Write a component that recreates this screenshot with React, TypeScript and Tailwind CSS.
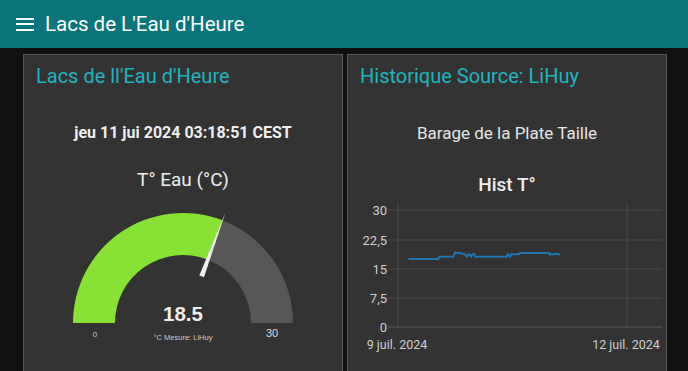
import React from "react";

const linePts: [number, number][] = [
  [190, 210], [280, 210], [283, 203], [325, 203], [330, 191], [345, 192], [360, 196], [365, 203],
  [372, 196], [378, 202], [382, 196], [388, 196], [390, 203], [485, 203], [488, 196], [495, 203],
  [498, 196], [522, 196], [525, 192], [612, 192], [615, 198], [620, 194], [625, 197], [630, 194], [645, 196],
];

function Gauge() {
  return (
    <svg width="240" height="145" viewBox="63 205 240 145" className="block mx-auto">
      <path d="M 73 323 A 110 110 0 0 1 222.4 220.3 L 207.3 259.5 A 68 68 0 0 0 115 323 Z" fill="#87e234" />
      <path d="M 222.4 220.3 A 110 110 0 0 1 293 323 L 251 323 A 68 68 0 0 0 207.3 259.5 Z" fill="#575757" />
      <polygon points="199.3,275.4 204.0,277.2 225.3,213" fill="#eeeeee" />
      <text x="95" y="337" fill="#cccccc" fontSize="8" textAnchor="middle" fontFamily="'Liberation Sans', Arial, sans-serif">0</text>
      <text x="272" y="337" fill="#dddddd" fontSize="11" textAnchor="middle" fontFamily="'Liberation Sans', Arial, sans-serif">30</text>
      <text x="183" y="321" fill="#eeeeee" fontSize="20.5" fontWeight="bold" textAnchor="middle" fontFamily="'Liberation Sans', Arial, sans-serif">18.5</text>
      <text x="183" y="340" fill="#cccccc" fontSize="7.5" textAnchor="middle" fontFamily="'Liberation Sans', Arial, sans-serif">°C Mesure: LiHuy</text>
    </svg>
  );
}

function Chart() {
  const grid = [
    { y: 211, l: "30" },
    { y: 241, l: "22,5" },
    { y: 270, l: "15" },
    { y: 299, l: "7,5" },
    { y: 328, l: "0" },
  ];
  const pts = linePts.map(([x, y]) => `${344 + x / 3},${190 + y / 3}`).join(" ");
  return (
    <svg width="320" height="160" viewBox="347 198 320 160" className="block" style={{ fontFamily: "Roboto, 'Liberation Sans', sans-serif" }}>
      {grid.map((g) => (
        <g key={g.l}>
          <line x1="387" x2="661" y1={g.y} y2={g.y} stroke={g.y === 328 ? "#5a5a5a" : "#4a4a4a"} strokeWidth="1" />
          <text x="386" y={g.y + 4.5} fill="#d0d0d0" fontSize="13" textAnchor="end">{g.l}</text>
        </g>
      ))}
      <line x1="397" x2="397" y1="204" y2="328" stroke="#4a4a4a" strokeWidth="1" />
      <line x1="626" x2="626" y1="204" y2="328" stroke="#4a4a4a" strokeWidth="1" />
      <polyline points={pts} fill="none" stroke="#1f77b4" strokeWidth="2" />
      <text x="396" y="350" fill="#d0d0d0" fontSize="12.5" textAnchor="middle">9 juil. 2024</text>
      <text x="625" y="350" fill="#d0d0d0" fontSize="12.5" textAnchor="middle">12 juil. 2024</text>
    </svg>
  );
}

export default function App() {
  return (
    <div className="w-[688px] h-[371px] overflow-hidden bg-[#111111]" style={{ fontFamily: "Roboto, 'Liberation Sans', sans-serif" }}>
      <header className="h-12 bg-[#097479] flex items-center pl-4">
        <div className="flex flex-col gap-[3.5px] w-[18px]">
          <div className="h-[2px] bg-white" />
          <div className="h-[2px] bg-white" />
          <div className="h-[2px] bg-white" />
        </div>
        <h1 className="ml-[11px] text-white text-[20.5px] leading-none">Lacs de L'Eau d'Heure</h1>
      </header>
      <main className="flex gap-1 pl-[23px] pt-[6px]">
        <section className="w-[320px] h-[340px] bg-[#333333] border border-[#575757] flex flex-col">
          <h2 className="pl-[12px] pt-[9px] text-[20px] leading-6 text-[#1db5c0]">Lacs de ll'Eau d'Heure</h2>
          <div className="mt-[35px] text-center text-[16px] leading-5 font-bold text-[#eeeeee]">jeu 11 jui 2024 03:18:51 CEST</div>
          <div className="mt-[24px] text-center text-[19px] leading-[26px] text-[#eeeeee]">T° Eau (°C)</div>
          <div className="mt-[12px]">
            <Gauge />
          </div>
        </section>
        <section className="w-[320px] h-[340px] bg-[#333333] border border-[#575757] flex flex-col">
          <h2 className="pl-[12px] pt-[9px] text-[20px] leading-6 text-[#1db5c0]">Historique Source: LiHuy</h2>
          <div className="mt-[35px] text-center text-[17px] leading-5 text-[#e6e6e6]">Barage de la Plate Taille</div>
          <div className="mt-[29px] text-center text-[19px] leading-[26px] font-medium text-[#eeeeee]">Hist T°</div>
          <div className="-mt-[1px]">
            <Chart />
          </div>
        </section>
      </main>
    </div>
  );
}
